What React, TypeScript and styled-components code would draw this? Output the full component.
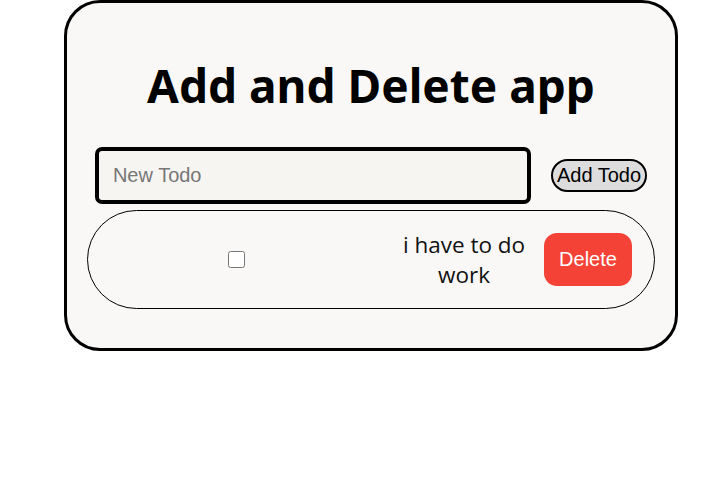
import styled, { createGlobalStyle } from "styled-components"

const GlobalStyle = createGlobalStyle`
  body {
    margin: 0;
    background: #ffffff;
    font-family: "Liberation Sans", Arial, sans-serif;
  }
`

const Card = styled.div`
  box-sizing: border-box;
  width: 614px;
  height: 351px;
  margin-left: 64px;
  padding: 0 20px;
  background: #f9f8f6;
  border: 3.5px solid #000;
  border-radius: 36px;
`

const Title = styled.h1`
  margin: 54px 0 34px;
  text-align: center;
  font-family: "Noto Sans", "Open Sans", sans-serif;
  font-size: 46px;
  font-weight: 700;
  line-height: 56px;
  color: #000;
`

const InputRow = styled.div`
  display: flex;
  justify-content: center;
  align-items: center;
  gap: 20px;
`

const TodoInput = styled.input`
  box-sizing: border-box;
  width: 436px;
  height: 57px;
  padding: 0 14px;
  background: #f6f5f1;
  border: 4px solid #000;
  border-radius: 7px;
  font-family: "Liberation Sans", Arial, sans-serif;
  font-size: 20px;
  outline: none;

  &::placeholder {
    color: #777;
  }
`

const AddButton = styled.button`
  box-sizing: border-box;
  height: 33px;
  padding: 0 4px;
  background: #dddddd;
  border: 2px solid #000;
  border-radius: 17px;
  font-family: "Liberation Sans", Arial, sans-serif;
  font-size: 20px;
  color: #000;
`

const List = styled.ul`
  margin: 6px 0 0;
  padding: 0;
  list-style: none;
`

const TodoItem = styled.li`
  box-sizing: border-box;
  display: grid;
  grid-template-columns: 1fr 130px auto;
  align-items: center;
  column-gap: 15px;
  height: 99px;
  padding: 0 22px 0 0;
  border: 1px solid #000;
  border-radius: 50px;
`

const Check = styled.input`
  justify-self: center;
  width: 17px;
  height: 17px;
  margin: 0;
`

const TodoText = styled.span`
  text-align: center;
  font-family: "Open Sans", "Noto Sans", sans-serif;
  font-size: 22.5px;
  line-height: 30px;
  color: #111;
`

const DeleteButton = styled.button`
  width: 88px;
  height: 53px;
  background: #f44336;
  border: none;
  border-radius: 13px;
  font-family: "Liberation Sans", Arial, sans-serif;
  font-size: 20px;
  color: #fff;
`

const App = () => {
  return (
    <>
      <GlobalStyle />
      <Card>
        <Title>Add and Delete app</Title>
        <InputRow>
          <TodoInput type="text" placeholder="New Todo" />
          <AddButton>Add Todo</AddButton>
        </InputRow>
        <List>
          <TodoItem>
            <Check type="checkbox" />
            <TodoText>i have to do work</TodoText>
            <DeleteButton>Delete</DeleteButton>
          </TodoItem>
        </List>
      </Card>
    </>
  )
}

export default App
